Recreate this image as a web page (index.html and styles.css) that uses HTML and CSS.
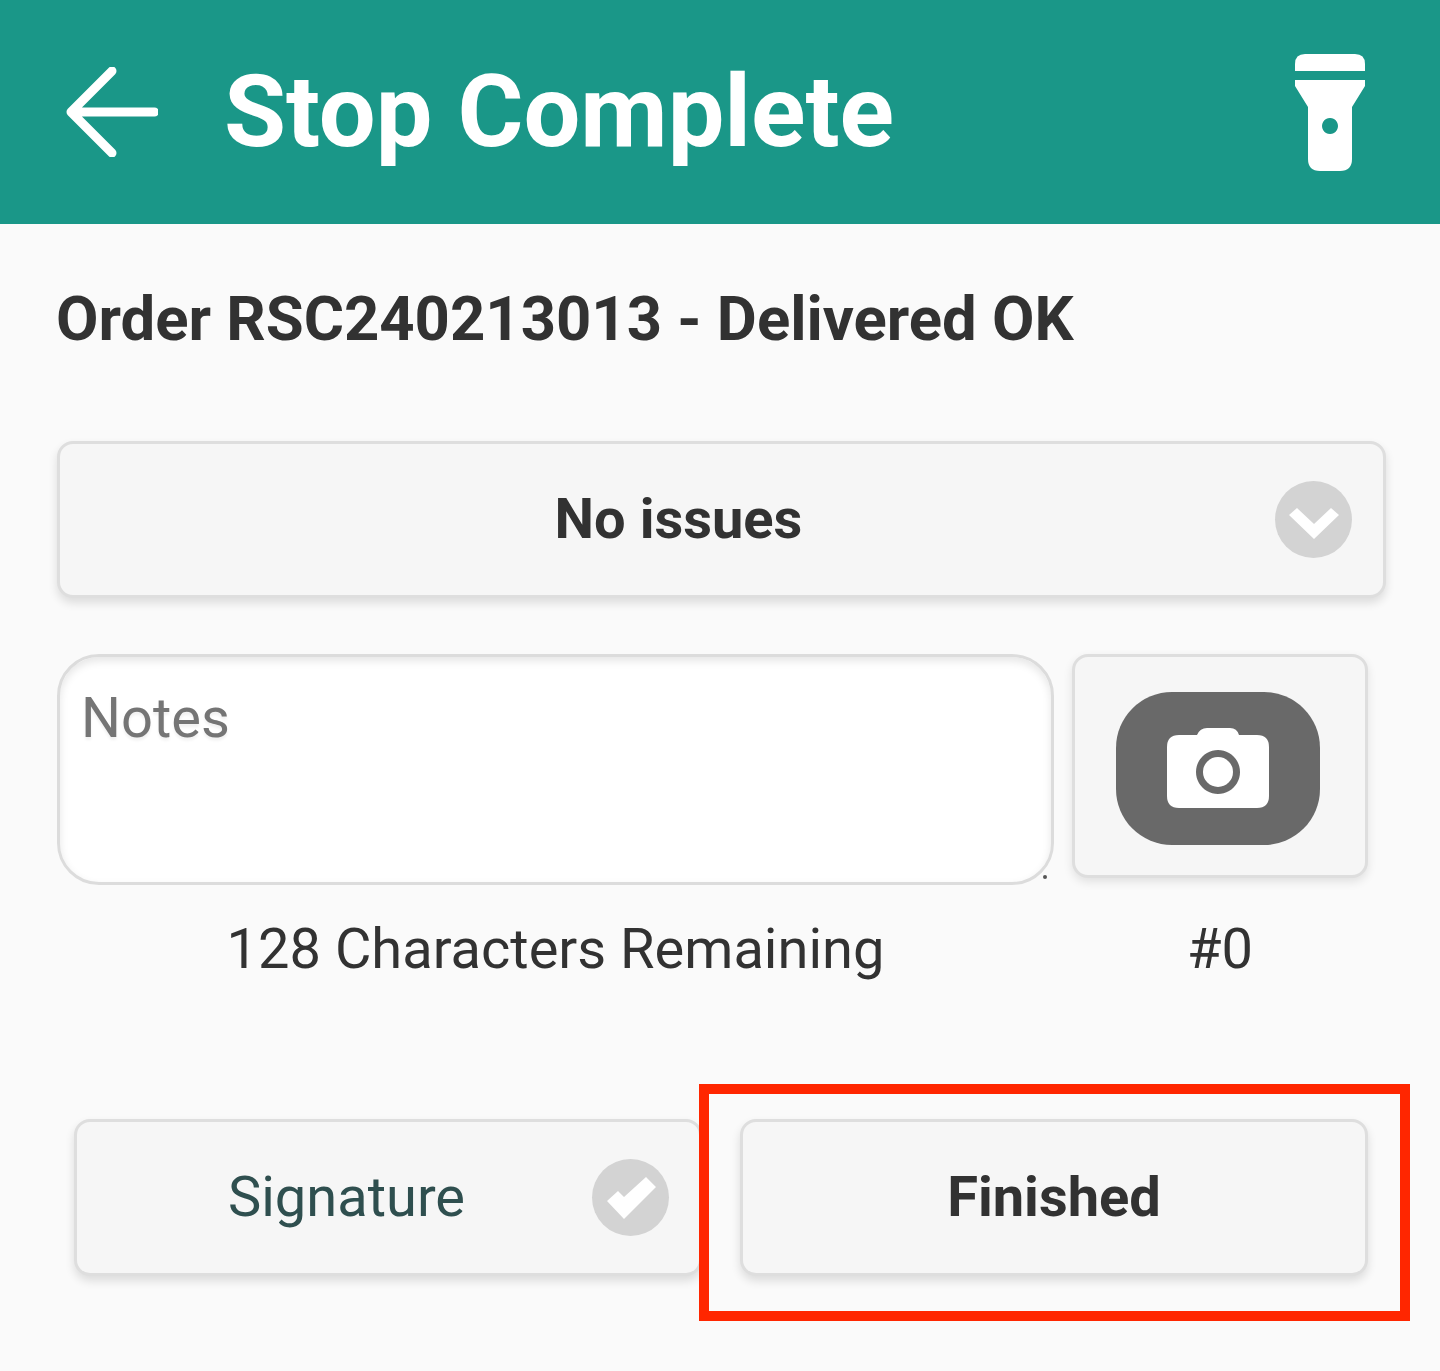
FILE: index.html
```html
<!DOCTYPE html>
<html lang="en">
<head>
    <meta charset="UTF-8">
    <meta name="viewport" content="width=device-width, initial-scale=1.0">
    <title>Stop Complete</title>
    <link rel="stylesheet" href="styles.css">
</head>
<body>
    <header class="app-bar">
        <svg class="back-icon" width="92" height="90" viewBox="0 0 92 90">
            <path d="M46 4 L5 45 L46 86 M5 45 H88.500" fill="none" stroke="#fff" stroke-width="9" stroke-linecap="round" stroke-linejoin="round"/>
        </svg>
        <h1 class="title">Stop Complete</h1>
        <svg class="torch-icon" width="70" height="117" viewBox="0 0 70 117">
            <path d="M10 0 H60 Q70 0 70 10 V17 H0 V10 Q0 0 10 0 Z" fill="#fff"/>
            <path fill-rule="evenodd" d="M0 26 H70 V32 L57 53 V105 Q57 117 45 117 H25 Q13 117 13 105 V53 L0 32 Z M35 64 a8 8 0 1 0 0.01 0 Z" fill="#fff"/>
        </svg>
    </header>

    <main class="content">
        <h2 class="order">Order RSC240213013 - Delivered OK</h2>

        <div class="select-box">
            <span class="select-label">No issues</span>
            <span class="round-icon select-icon">
                <svg width="50" height="38" viewBox="0 0 50 38"><path d="M0 14 L8 7 L25 23 L42 7 L50 14 L25 38 Z" fill="#fff"/></svg>
            </span>
        </div>

        <div class="notes-row">
            <div class="notes-col">
                <div class="notes-box">
                    <span class="placeholder">Notes</span>
                    <span class="resize-dot"></span>
                </div>
                <div class="caption">128 Characters Remaining</div>
            </div>
            <div class="photo-col">
                <div class="photo-box">
                    <div class="photo-btn">
                        <svg width="102" height="80" viewBox="0 0 102 80">
                            <path fill-rule="evenodd" d="M12 7 H30 Q33 0 40 0 H63 Q70 0 72 7 H90 Q102 7 102 19 V68 Q102 80 90 80 H12 Q0 80 0 68 V19 Q0 7 12 7 Z M51 22 a22 22 0 1 0 0.01 0 Z" fill="#fff"/>
                            <circle cx="51" cy="44" r="15" fill="#fff"/>
                        </svg>
                    </div>
                </div>
                <div class="caption">#0</div>
            </div>
        </div>

        <div class="actions">
            <div class="btn btn-signature">
                <span class="signature-label">Signature</span>
                <span class="round-icon signature-icon">
                    <svg width="50" height="42" viewBox="0 0 50 42"><path d="M1 24 L12 14 L18 20 L40 0 L50 10 L18 42 Z" fill="#fff"/></svg>
                </span>
            </div>
            <div class="btn btn-finished"><span class="finished-label">Finished</span></div>
        </div>
    </main>

    <div class="highlight"></div>
</body>
</html>
```

FILE: styles.css
```css
body {
    font-family: Roboto, 'Liberation Sans', sans-serif;
    margin: 0;
    height: 1371px;
    overflow: hidden;
    background-color: #fafafa;
    color: #323232;
}
.app-bar {
    display: flex;
    align-items: center;
    height: 224px;
    padding: 0 75px 0 66px;
    box-sizing: border-box;
    background-color: #1a9788;
    color: #fff;
}
.back-icon {
    margin-right: 66px;
}
.title {
    flex: 1;
    margin: -2px 0 0;
    font-size: 100.8px;
    font-weight: 700;
}
.content {
    padding: 0 55px 0 57px;
}
.order {
    margin: 0 0 0 -1px;
    padding-top: 60px;
    height: 217px;
    box-sizing: border-box;
    line-height: 70px;
    font-size: 61.6px;
    font-weight: 700;
}
.select-box {
    display: flex;
    align-items: center;
    justify-content: space-between;
    height: 157px;
    margin-right: -1px;
    padding: 0 31px 0 0;
    box-sizing: border-box;
    background-color: #f6f6f6;
    border: 3px solid #dedede;
    border-radius: 16px;
    box-shadow: 0 5px 10px rgba(0, 0, 0, 0.12);
    font-size: 56px;
    font-weight: 700;
}
.select-label {
    flex: 1;
    margin-top: -2px;
    text-align: center;
    padding-left: 22px;
}
.round-icon {
    display: flex;
    align-items: center;
    justify-content: center;
    width: 77px;
    height: 77px;
    border-radius: 50%;
    background-color: #d3d3d3;
}
.notes-row {
    display: flex;
    gap: 18px;
    margin-top: 56px;
}
.notes-col {
    flex: 0 0 997px;
}
.photo-col {
    flex: 0 0 296px;
}
.notes-box {
    position: relative;
    height: 231px;
    padding: 28px 21px;
    box-sizing: border-box;
    background-color: #fff;
    border: 3px solid #dcdcdc;
    border-radius: 42px;
    box-shadow: inset 0 4px 8px rgba(0, 0, 0, 0.1);
}
.placeholder {
    display: block;
    line-height: 66px;
    font-size: 56px;
    color: #757575;
    text-shadow: 0 3px 3px rgba(0, 0, 0, 0.06);
}
.resize-dot {
    position: absolute;
    right: 4px;
    bottom: 3px;
    width: 4px;
    height: 4px;
    border-radius: 50%;
    background-color: #555;
}
.photo-box {
    display: flex;
    align-items: center;
    justify-content: center;
    height: 224px;
    box-sizing: border-box;
    background-color: #f6f6f6;
    border: 3px solid #dedede;
    border-radius: 16px;
    box-shadow: 0 4px 10px rgba(0, 0, 0, 0.1);
}
.photo-btn {
    display: flex;
    align-items: center;
    justify-content: center;
    width: 204px;
    height: 153px;
    margin-left: -5px;
    margin-top: 5px;
    padding-bottom: 2px;
    box-sizing: border-box;
    border-radius: 56px;
    background-color: #696969;
}
.caption {
    margin-top: 38px;
    text-align: center;
    line-height: 66px;
    font-size: 56px;
}
.notes-col .caption {
    margin-top: 31px;
}
.actions {
    display: flex;
    gap: 38px;
    margin-top: 137px;
    padding-left: 17px;
}
.btn {
    display: flex;
    align-items: center;
    width: 628px;
    height: 157px;
    box-sizing: border-box;
    background-color: #f6f6f6;
    border: 3px solid #dedede;
    border-radius: 16px;
    box-shadow: 0 5px 10px rgba(0, 0, 0, 0.12);
    font-size: 56px;
}
.btn-signature {
    padding: 0 30px 0 151px;
    justify-content: space-between;
    color: #2f4f4f;
}
.signature-label,
.finished-label {
    margin-top: -2px;
}
.btn-finished {
    justify-content: center;
    font-weight: 700;
}
.highlight {
    position: absolute;
    left: 699px;
    top: 1084px;
    width: 711px;
    height: 237px;
    box-sizing: border-box;
    border: 10px solid #ff2600;
}
```
